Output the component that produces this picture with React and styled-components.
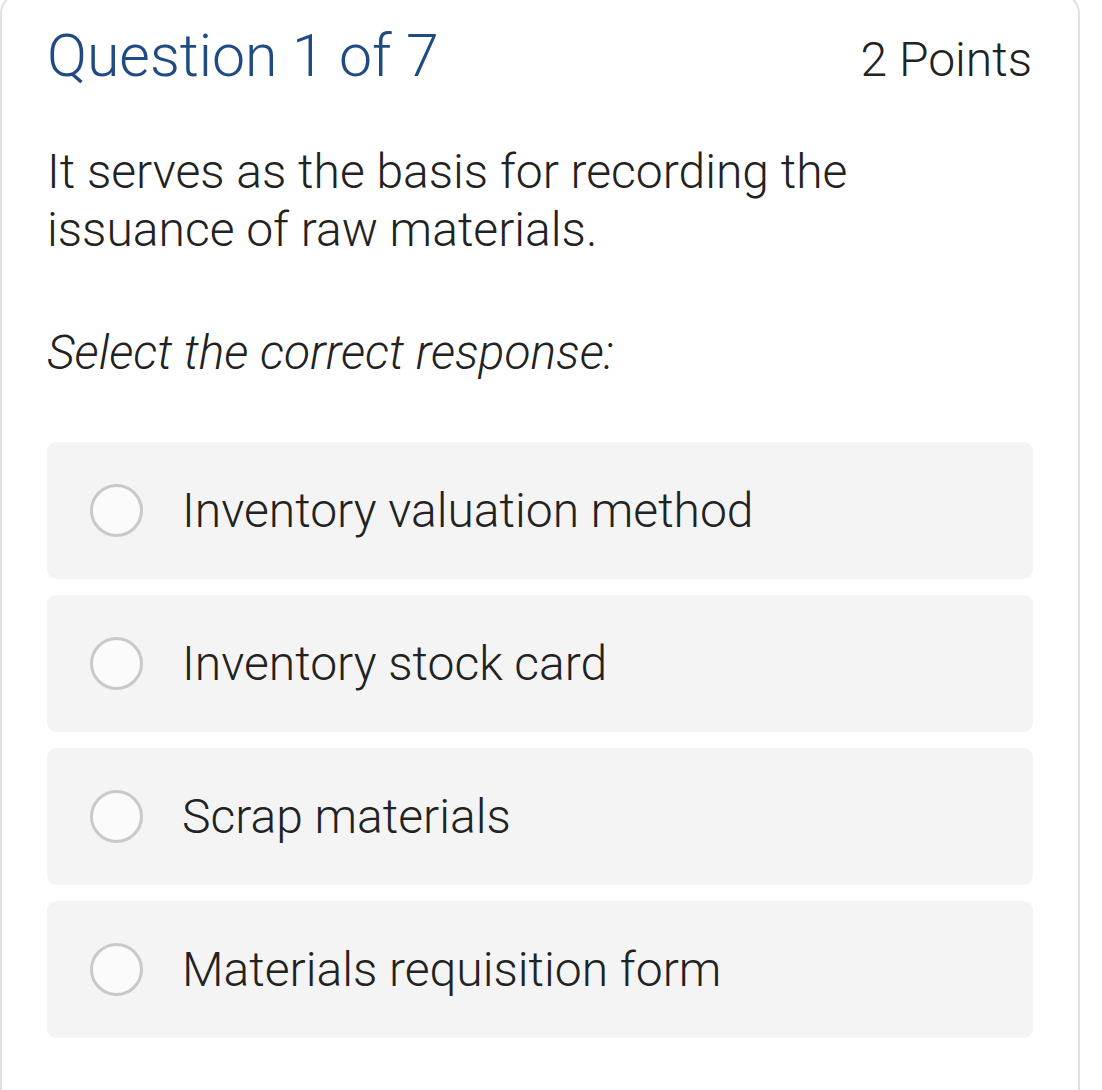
import React from "react";
import styled, { createGlobalStyle } from "styled-components";

const GlobalStyle = createGlobalStyle`
  body {
    margin: 0;
    background: #ffffff;
    font-family: Roboto, "Liberation Sans", sans-serif;
    overflow: hidden;
  }
`;

const options = [
  "Inventory valuation method",
  "Inventory stock card",
  "Scrap materials",
  "Materials requisition form",
];

const App = () => {
  return (
    <>
      <GlobalStyle />
      <Card>
        <Header>
          <Title>Question 1 of 7</Title>
          <Points>2 Points</Points>
        </Header>
        <QuestionText>
          It serves as the basis for recording the
          <br />
          issuance of raw materials.
        </QuestionText>
        <Prompt>Select the correct response:</Prompt>
        <OptionList>
          {options.map((label) => (
            <Option key={label}>
              <Radio />
              <OptionLabel>{label}</OptionLabel>
            </Option>
          ))}
        </OptionList>
      </Card>
    </>
  );
};

export default App;

const Card = styled.div`
  box-sizing: border-box;
  width: 1080px;
  min-height: 1120px;
  margin-top: -8px;
  border: 2px solid #e2dfe2;
  border-radius: 22px;
  padding: 27px 45px 40px 45px;
  background: #ffffff;
  font-weight: 300;
`;

const Header = styled.div`
  display: flex;
  justify-content: space-between;
  align-items: baseline;
  font-size: 59px;
  line-height: 70px;
`;

const Title = styled.div`
  color: #1f4b82;
`;

const Points = styled.div`
  color: #222222;
  font-size: 48px;
  margin-right: 1px;
`;

const QuestionText = styled.p`
  margin: 48px 0 0 0;
  font-size: 48px;
  line-height: 58px;
  color: #222222;
`;

const Prompt = styled.p`
  margin: 65px 0 0 0;
  font-size: 48px;
  line-height: 58px;
  font-style: italic;
  color: #222222;
`;

const OptionList = styled.div`
  display: flex;
  flex-direction: column;
  gap: 16px;
  margin-top: 60px;
`;

const Option = styled.div`
  display: flex;
  align-items: center;
  height: 137px;
  padding-left: 43px;
  border-radius: 9px;
  background: #f4f4f4;
  gap: 39px;
`;

const Radio = styled.span`
  box-sizing: border-box;
  flex: 0 0 auto;
  width: 53px;
  height: 53px;
  border-radius: 50%;
  border: 3px solid #c9c9c9;
  background: #fbfbfb;
`;

const OptionLabel = styled.span`
  font-size: 48px;
  line-height: 58px;
  color: #222222;
`;
